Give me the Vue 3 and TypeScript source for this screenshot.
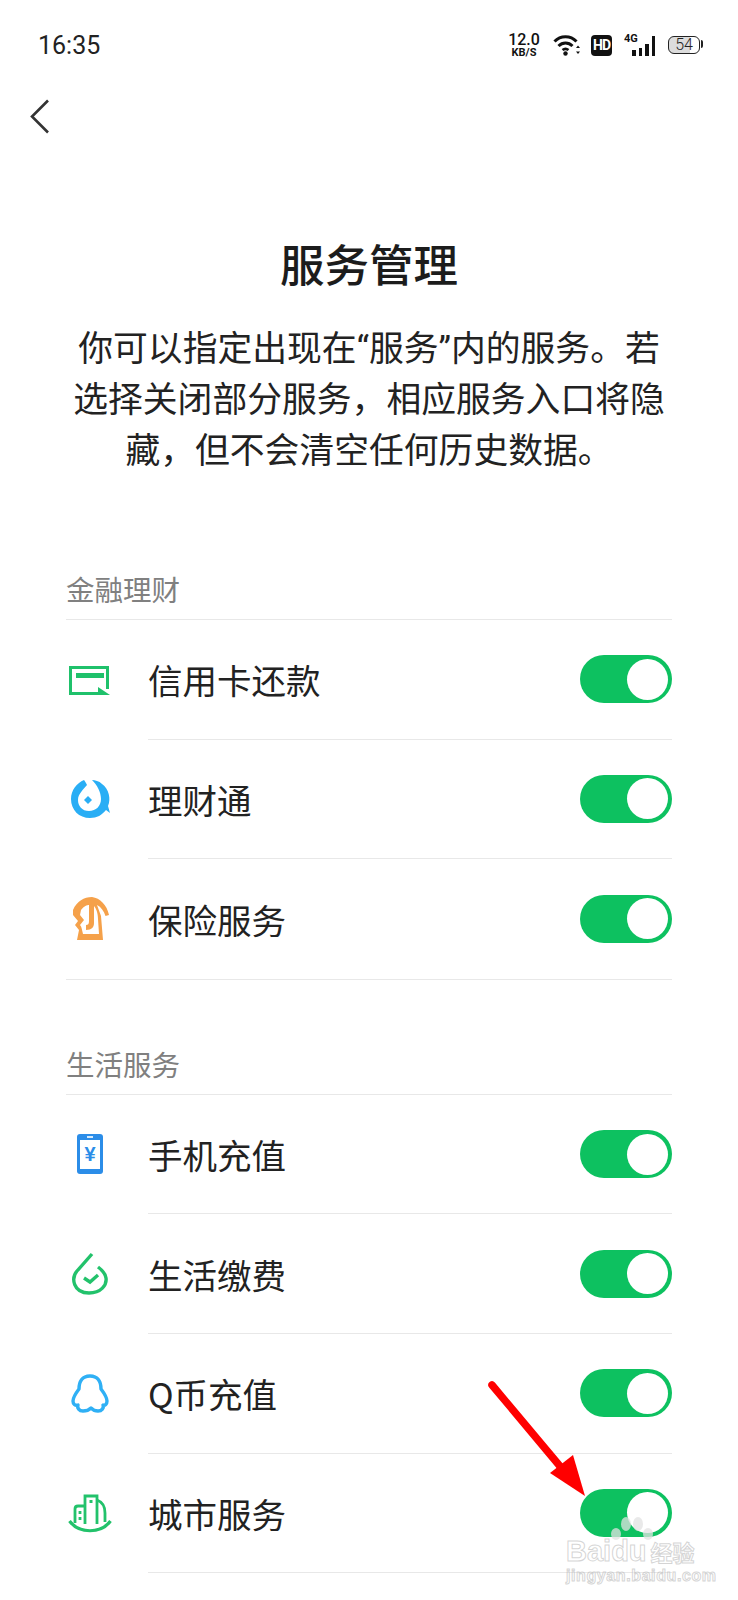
<script setup lang="ts">
type Row = { name: string; icon: string }
type Section = { title: string; rows: Row[] }

const sections: Section[] = [
  {
    title: '金融理财',
    rows: [
      { name: '信用卡还款', icon: 'card' },
      { name: '理财通', icon: 'licai' },
      { name: '保险服务', icon: 'insure' },
    ],
  },
  {
    title: '生活服务',
    rows: [
      { name: '手机充值', icon: 'phone' },
      { name: '生活缴费', icon: 'bill' },
      { name: 'Q币充值', icon: 'qq' },
      { name: '城市服务', icon: 'city' },
    ],
  },
]
</script>

<template>
  <div class="page">
    <div class="status">
      <span class="time">16:35</span>
      <div class="status-right">
        <div class="speed"><b>12.0</b><small>KB/S</small></div>
        <svg class="wifi" width="28" height="22" viewBox="0 0 28 22" fill="none" stroke="#111">
          <path d="M1.5 7.5C7.5 1 17.5 1 23.5 7.5" stroke-width="3" />
          <path d="M5.5 12C9.5 8 15.5 8 19.5 12" stroke-width="3" />
          <path d="M9.5 16C11.5 14.4 13.5 14.4 15.5 16" stroke-width="2.6" />
          <circle cx="12.5" cy="19.5" r="2.2" fill="#111" stroke="none" />
          <path d="M25 11.5l-2 2.4h4zM25 20l-2-2.4h4z" fill="#111" stroke="none" />
        </svg>
        <div class="hd">HD</div>
        <div class="signal">
          <span>4G</span>
          <i class="b1"></i><i class="b2"></i><i class="b3"></i><i class="b4"></i>
        </div>
        <div class="battery"><span>54</span></div>
      </div>
    </div>

    <div class="nav">
      <svg width="20" height="35" viewBox="0 0 20 35" fill="none" stroke="#333" stroke-width="2.6">
        <path d="M18 1.5L2 17.5L18 33.5" />
      </svg>
    </div>

    <h1 class="title">服务管理</h1>
    <p class="desc">你可以指定出现在“服务”内的服务。若<br />选择关闭部分服务，相应服务入口将隐<br />藏，但不会清空任何历史数据。</p>

    <section v-for="s in sections" :key="s.title" class="section">
      <h2>{{ s.title }}</h2>
      <div v-for="(r, i) in s.rows" :key="r.name" class="row" :class="{ last: i === s.rows.length - 1 }">
        <div class="icon">
          <svg v-if="r.icon === 'card'" width="44" height="44" viewBox="0 0 44 44" fill="none">
            <path d="M30 35.5H2.5V9.5H39.5V31" stroke="#1fc16b" stroke-width="3" />
            <rect x="8" y="15" width="28" height="5" fill="#1fc16b" />
            <path d="M30 29L42 37H30Z" fill="#1fc16b" />
          </svg>
          <svg v-else-if="r.icon === 'licai'" width="44" height="44" viewBox="0 0 44 44">
            <path fill="#29aef5" d="M16 3C9 6 3 13 3 22C3 33 11 41 22 41C29 41 34 38 38 33L42 36L40 29C43 22 41 12 34 7C31 4 27 3 24 3C29 8 33 15 33 22C33 29 28 34 21 34C14 34 10 29 10 23C10 17 15 13 19 8C18 6 17 4 16 3Z" />
            <path fill="#29aef5" d="M20 19L24 23L20 27L16 23Z" />
          </svg>
          <svg v-else-if="r.icon === 'insure'" width="44" height="44" viewBox="0 0 44 44">
            <path fill="#f5a14a" d="M5 13C9 4 16 0 24 0C32 1 39 8 41 18L37.5 19C36 14 33 10 29 8L33 19L35 43L9 43L11 33L7 28L10 24L5 18Z" />
            <path fill="#fff" d="M13 13C16 9 19 8 21 8L21 24C21 27 20 28 18 28L18 33C24 33 26 30 26 26L26 9C28 11 30 16 30 22L31 37L15 37C14 34 14 30 12 28L16 23L12 18Z" />
          </svg>
          <svg v-else-if="r.icon === 'phone'" width="44" height="44" viewBox="0 0 44 44">
            <rect x="9" y="1" width="26" height="40" rx="3" fill="#2b8de8" />
            <rect x="12" y="7" width="20" height="29" fill="#fff" />
            <rect x="19" y="3.2" width="6" height="1.6" fill="#fff" />
            <text x="22" y="28" text-anchor="middle" class="yen">¥</text>
          </svg>
          <svg v-else-if="r.icon === 'bill'" width="44" height="44" viewBox="0 0 44 44" fill="none" stroke="#22c26b" stroke-width="3.4">
            <path d="M24 2L9 19C3 26 5 41 21 41C33 41 39 33 38 26C37.5 22 34 18 30 15" />
            <path d="M16 26L22 30L30 23" />
          </svg>
          <svg v-else-if="r.icon === 'qq'" width="44" height="44" viewBox="0 0 44 44" fill="none" stroke="#2fb0f5" stroke-width="3.4" stroke-linejoin="round">
            <path d="M22 4C14 4 11 10 11 17C8 21 5 25 5 29C5 32 7 34 10 33C9 36 11 39 15 39C18 39 21 38 23 36C25 38 27 39 30 39C34 39 36 36 35 33C37 34 39 32 39 29C39 25 36 21 33 17C33 10 30 4 22 4Z" />
          </svg>
          <svg v-else-if="r.icon === 'city'" width="44" height="44" viewBox="0 0 44 44" fill="none" stroke="#22c26b" stroke-width="2.8">
            <path d="M1.5 30C11 43 33 43 42.500 30" stroke-width="3.2" />
            <path d="M7 32V18Q7 15 10 15H17" />
            <path d="M17 33V5H29V33" />
            <path d="M29 9Q37 12 37 22V31" />
            <path d="M12 20V23M12 26V29" stroke-width="2.8" />
            <path d="M23 9V12" stroke-width="3" />
          </svg>
        </div>
        <div class="row-main">
          <span class="name">{{ r.name }}</span>
          <div class="switch"><div class="knob"></div></div>
        </div>
      </div>
    </section>

    <svg class="arrow" width="110" height="130" viewBox="0 0 110 130" fill="none">
      <path d="M5 5L82 97" stroke="#f00" stroke-width="7.5" stroke-linecap="round" />
      <path d="M98 116L86 75L63 93Z" fill="#f00" />
    </svg>

    <div class="watermark">
      <svg class="paw" width="44" height="30" viewBox="0 0 44 30">
        <ellipse cx="6" cy="18" rx="5" ry="6" />
        <ellipse cx="16" cy="8" rx="5" ry="7" />
        <ellipse cx="28" cy="8" rx="5" ry="7" />
        <ellipse cx="38" cy="18" rx="5" ry="6" />
      </svg>
      <div class="wm-top">Baidu<em>经验</em></div>
      <div class="wm-url">jingyan.baidu.com</div>
    </div>
  </div>
</template>

<style scoped>
.page {
  position: relative;
  width: 738px;
  height: 1600px;
  overflow: hidden;
  background: #fff;
  color: #1c1c1c;
  font-family: "Noto Sans CJK SC", "Noto Sans", sans-serif;
}
.status {
  height: 90px;
  padding: 0 38px 0 38px;
  display: flex;
  align-items: center;
  justify-content: space-between;
  box-sizing: border-box;
}
.time {
  font-family: Roboto, sans-serif;
  font-size: 25px;
  color: #222;
}
.status-right {
  display: flex;
  align-items: center;
  font-family: Roboto, sans-serif;
  color: #111;
}
.speed {
  width: 34px;
  display: flex;
  flex-direction: column;
  align-items: center;
  line-height: 1;
}
.speed b { font-size: 16px; font-weight: 500; line-height: 15px; }
.speed small { font-size: 11px; font-weight: 700; line-height: 11px; }
.wifi { margin-left: 12px; }
.hd {
  margin-left: 10px;
  width: 21px;
  height: 21px;
  background: #111;
  color: #fff;
  border-radius: 4px;
  font-size: 14px;
  font-weight: 700;
  line-height: 21px;
  text-align: center;
  letter-spacing: -1px;
}
.signal {
  position: relative;
  margin-left: 12px;
  width: 31px;
  height: 21px;
  display: flex;
  align-items: flex-end;
  justify-content: flex-end;
  gap: 3px;
}
.signal span {
  position: absolute;
  left: 0;
  top: -2px;
  font-size: 11px;
  font-weight: 700;
  line-height: 12px;
}
.signal i { display: block; width: 3.5px; background: #111; }
.signal .b1 { height: 6px; }
.signal .b2 { height: 8px; }
.signal .b3 { height: 12px; }
.signal .b4 { height: 20px; }
.battery {
  position: relative;
  margin-left: 13px;
  width: 32px;
  height: 18px;
  border: 1.5px solid #222;
  border-radius: 6px;
  box-sizing: border-box;
  background: linear-gradient(90deg, #dcdcdc 70%, #fff 70%);
  font-size: 16px;
  font-weight: 300;
  line-height: 15px;
  text-align: center;
  color: #222;
}
.battery::after {
  content: "";
  position: absolute;
  right: -4px;
  top: 3px;
  width: 2px;
  height: 8px;
  background: #222;
  border-radius: 0 2px 2px 0;
}
.nav {
  height: 52px;
  padding: 9px 0 0 30px;
  box-sizing: border-box;
}
.title {
  margin: 89px 0 0;
  font-size: 44.5px;
  font-weight: 500;
  line-height: 64px;
  text-align: center;
}
.desc {
  margin: 29px 0 0;
  font-family: Roboto, "Noto Sans CJK SC", sans-serif;
  font-size: 34.8px;
  line-height: 51px;
  text-align: center;
  color: #222;
}
.section { margin: 0 66px; }
.section h2 {
  margin: 0;
  padding: 64px 0 10px;
  font-size: 28.5px;
  font-weight: 400;
  line-height: 40px;
  color: #808080;
  border-bottom: 1px solid #e8e8e8;
}
.section:first-of-type h2 { padding-top: 92px; }
.row {
  display: flex;
  align-items: center;
  height: 119.6px;
}
.section:first-of-type .row.last .row-main { border-bottom: 0; }
.section:first-of-type .row.last { border-bottom: 1px solid #e8e8e8; }
.icon {
  width: 82px;
  flex: none;
  display: flex;
  padding-left: 2px;
  box-sizing: border-box;
}
.row-main {
  flex: 1;
  height: 100%;
  display: flex;
  align-items: center;
  justify-content: space-between;
  border-bottom: 1px solid #e8e8e8;
  box-sizing: border-box;
}
.name { font-size: 34.5px; color: #222; }
.switch {
  width: 92px;
  height: 48px;
  background: #0dc160;
  border-radius: 24px;
  display: flex;
  align-items: center;
  justify-content: flex-end;
  padding-right: 4px;
  box-sizing: border-box;
}
.knob { width: 41px; height: 41px; border-radius: 50%; background: #fff; }
.yen {
  font-family: "Liberation Sans", sans-serif;
  font-size: 20px;
  font-weight: 700;
  fill: #2b8de8;
}
.arrow {
  position: absolute;
  left: 487px;
  top: 1380px;
}
.watermark {
  position: absolute;
  left: 566px;
  top: 1516px;
  width: 134px;
  height: 70px;
  font-family: "Liberation Sans", "Noto Sans CJK SC", sans-serif;
  color: rgba(255, 255, 255, 0.6);
  -webkit-text-stroke: 1px rgba(170, 170, 170, 0.5);
}
.paw {
  position: absolute;
  left: 44px;
  top: 0;
  fill: rgba(225, 225, 225, 0.75);
}
.wm-top {
  position: absolute;
  left: 0;
  top: 20px;
  font-size: 29px;
  font-weight: 700;
  line-height: 30px;
  white-space: nowrap;
}
.wm-top em {
  font-style: normal;
  font-size: 22px;
  margin-left: 4px;
  font-family: "Noto Sans CJK SC", sans-serif;
}
.wm-url {
  position: absolute;
  left: 0;
  top: 51px;
  font-size: 16px;
  font-weight: 700;
  line-height: 18px;
  white-space: nowrap;
  letter-spacing: 0.6px;
}
</style>
